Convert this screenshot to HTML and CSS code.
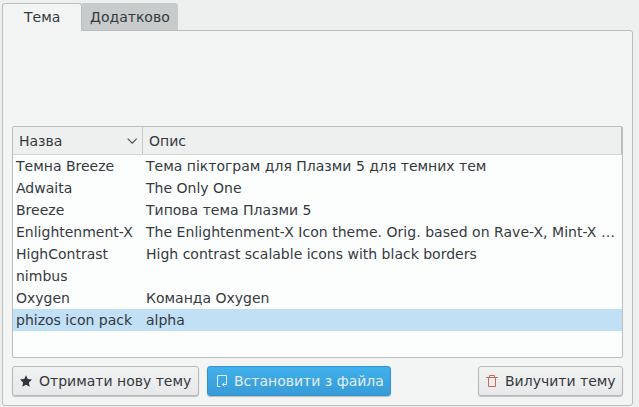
FILE: index.html
```
<!DOCTYPE html>
<html lang="uk">
<head>
<meta charset="utf-8">
<title>Тема</title>
<link rel="stylesheet" href="styles.css">
</head>
<body>
<nav class="tabs">
  <div class="tab active">Тема</div>
  <div class="tab">Додатково</div>
</nav>
<main class="panel">
  <section class="table">
    <div class="header">
      <div class="head name">Назва
        <svg width="12" height="8" viewBox="0 0 12 8"><path d="M1.700 1.700 6.200 6.200l4.500-4.500" fill="none" stroke="#454a4e" stroke-width="1.100"/></svg>
      </div>
      <div class="head desc">Опис</div>
    </div>
    <div class="row"><span>Темна Breeze</span><span>Тема піктограм для Плазми 5 для темних тем</span></div>
    <div class="row"><span>Adwaita</span><span>The Only One</span></div>
    <div class="row"><span>Breeze</span><span>Типова тема Плазми 5</span></div>
    <div class="row"><span>Enlightenment-X</span><span class="long">The Enlightenment-X Icon theme. Orig. based on Rave-X, Mint-X …</span></div>
    <div class="row"><span>HighContrast</span><span>High contrast scalable icons with black borders</span></div>
    <div class="row"><span>nimbus</span><span></span></div>
    <div class="row"><span>Oxygen</span><span>Команда Oxygen</span></div>
    <div class="row selected"><span>phizos icon pack</span><span>alpha</span></div>
  </section>
  <footer class="actions">
    <button class="button get">
      <svg width="16" height="16" viewBox="0 0 16 16"><path d="M8 2.200 9.800 6.100l4.200.5-3.100 2.900.8 4.300L8 11.700l-3.700 2.100.8-4.300L2 6.600l4.200-.5z" fill="#31363b"/></svg>
      Отримати нову тему
    </button>
    <button class="button primary">
      <svg width="16" height="16" viewBox="0 0 16 16"><path d="M7.500 13.500h-3v-11h9v9H9.500M11.500 9.500l-2 2 2 2" fill="none" stroke="#e6f2fa"/></svg>
      Встановити з файла
    </button>
    <button class="button remove">
      <svg width="16" height="16" viewBox="0 0 16 16"><path d="M2 4.500h12M5.500 4V2.500h5V4M4.500 5v8.500h7V5" fill="none" stroke="#c86a5a"/></svg>
      Вилучити тему
    </button>
  </footer>
</main>
</body>
</html>
```
FILE: styles.css
```
* { box-sizing: border-box; }
body {
  margin: 0;
  width: 639px;
  height: 407px;
  padding: 3px 6px 1px 2px;
  display: flex;
  flex-direction: column;
  overflow: hidden;
  background: #eef0ef;
  color: #35393f;
  font: 14px/22px "DejaVu Sans", sans-serif;
}
svg { display: block; flex: none; }
.tabs { display: flex; height: 27px; }
.tab {
  width: 96px;
  padding: 4px 0 0 8px;
  line-height: 20px;
  background: #c8cbcb;
  border-radius: 0 3px 0 0;
  white-space: nowrap;
}
.tab.active {
  width: 80px;
  height: 28px;
  padding: 3px 0 0 21px;
  background: #f3f5f4;
  border: 1px solid #bcbebd;
  border-bottom: 0;
  border-radius: 3px 3px 0 0;
  position: relative;
}
.panel {
  flex: 1;
  display: flex;
  flex-direction: column;
  padding: 95px 9px 8px;
  background: #f3f5f4;
  border: 1px solid #bcbebd;
  border-radius: 0 3px 3px 3px;
}
.table {
  height: 232px;
  border: 1px solid #bcbebd;
  border-radius: 2px;
  background: #fcfefd;
}
.header {
  display: flex;
  height: 28px;
  background: #eef0ef;
  border-bottom: 1px solid #d6d8d7;
  border-right: 1px solid #bcbebd;
  line-height: 28px;
}
.name {
  display: flex;
  align-items: center;
  justify-content: space-between;
  width: 130px;
  padding: 0 4px 0 6px;
  border-right: 1px solid #c5c7c6;
}
.desc { padding-left: 6px; }
.row { display: grid; grid-template-columns: 130px 1fr; height: 22px; white-space: nowrap; }
.row span { padding-left: 3px; }
.row .long { letter-spacing: 0.03px; }
.selected { background: #c1dff5; }
.actions { display: flex; gap: 8px; margin-top: 8px; }
.button {
  display: flex;
  align-items: center;
  gap: 5px;
  height: 30px;
  padding: 0 0 0 5px;
  border: 1px solid #b5b7b8;
  border-radius: 3px;
  background: linear-gradient(#f1f2f2, #e7e8e9);
  box-shadow: 0 1px 1px rgba(0, 0, 0, .22);
  color: inherit;
  font: inherit;
  white-space: nowrap;
}
.get { width: 187px; }
.primary {
  width: 184px;
  border-color: #3293cf;
  background: linear-gradient(#40b0eb, #389bd6);
  color: #e3eff7;
}
.remove { width: 145px; margin-left: auto; }
```
